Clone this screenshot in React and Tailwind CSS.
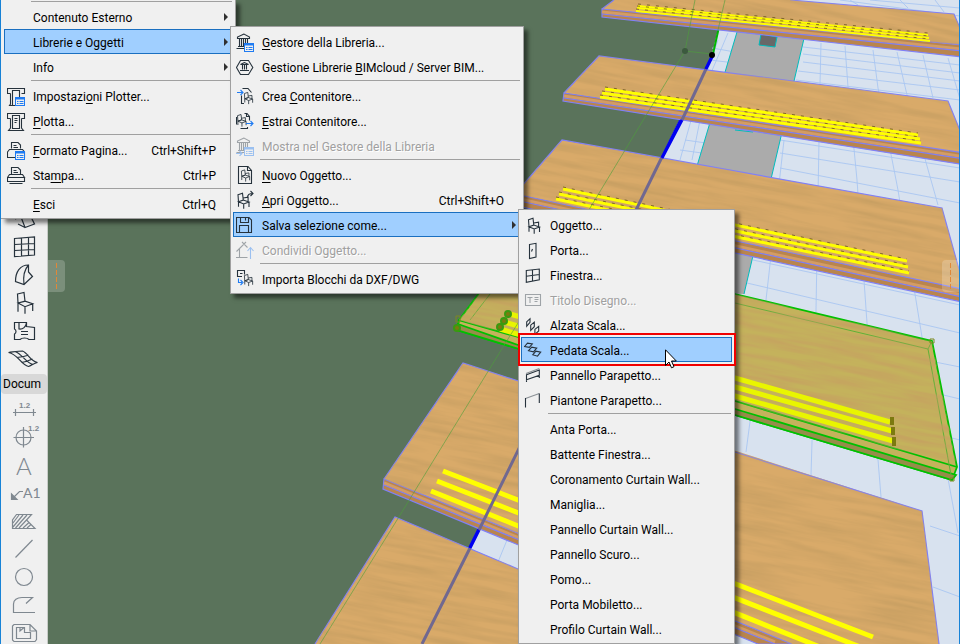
import clsx from "clsx";

const INK = "#26323c";
const BLUE = "#1f7bf2";

/* ---------- menu icons, 20 x 20 ---------- */

function PanelBadge() {
  return (
    <g stroke={BLUE} fill="none" strokeWidth="1">
      <rect x="8.5" y="11.5" width="9" height="8" fill="#f0f0f0" />
      <path d="M8 12.5h10" strokeWidth="2" />
      <path d="M10 15.5h1.5M12.5 15.5h4M10 17.5h1.5M12.5 17.5h4" />
    </g>
  );
}

function Chair({ transform }) {
  return (
    <path
      transform={transform}
      d="M4.5 4.7L9 3.2L9.8 10.1L5 11.7zM5 11.7L9.8 10.1L15.5 12L10.2 14zM5 11.7V16.7M10.2 14V18.8M15.5 12V17M9.6 8L14.6 7.2V11.8"
    />
  );
}

function Temple() {
  return (
    <path d="M8 2L1.5 5V6.5H13.5V5zM3.5 6.5V14.5M5.5 6.5V14.5M7.5 6.5V14.5M9.5 6.5V14.5M11.5 6.5V14.5M2 14.5H13M.5 16.5H14.5" />
  );
}

const icons = {
  plotSetup: (
    <>
      <path d="M3.5 7.5H.5V2.5H17.5V7.5H14.5M3.5 7.5V18L2.5 19.5H13M5.5 19.5V4.5H12.5V12" />
      <PanelBadge />
    </>
  ),
  plot: (
    <path d="M3.5 7.5H.5V2.5H17.5V7.5H14.5M3.5 7.5V17L1.5 19.5H16.5L14.5 17V7.5M5.5 17.5V4.5H12.5V17.5zM7.5 7.5H10.5M7.5 9.5H10.5M7.5 11.5H9.5" />
  ),
  pageSetup: (
    <>
      <path d="M4.5 8.5V2.5H11L13.5 5V8.5M6.5 5.5H9.5M6.5 7.5H11M2.5 9.5H15.5L17.5 12V17.5H.5V12z" />
      <PanelBadge />
    </>
  ),
  print: (
    <path d="M4.5 9.5V2.5H11L13.5 5V9.5M6.5 5.5H9.5M6.5 7.5H11M2.5 9.5H15.5L17.5 12.5H.5zM.5 12.5V16.5H17.5V12.5M2.5 18.5H15.5" />
  ),
  library: (
    <>
      <Temple />
      <PanelBadge />
    </>
  ),
  cloud: (
    <path d="M4.5 3.5H12.5L16.8 10.5L12.5 17.5H4.5L.5 10.5zM8.5 5.5L4.5 7.5H12.5zM6.5 7.5V12.5M8.5 7.5V12.5M10.5 7.5V12.5M4 13.5H13" />
  ),
  createBox: (
    <>
      <path d="M6.5 2.5H12L15.5 6.5M5.5 9.5V17.5H8" />
      <Chair transform="translate(5 4) scale(.75)" />
      <path d="M1 6.5H6.5M4.5 4L7 6.5L4.5 9" stroke={BLUE} />
    </>
  ),
  extractBox: (
    <>
      <path d="M.5 6V13.5M4.5 17.5H11.5V16M8.5 2.5H11L13.5 5.5V9.5M10.5 2.5V5.5H13" />
      <Chair transform="translate(-2 1) scale(.78)" />
      <path d="M10 12.5H16.5M14.5 10L17 12.5L14.5 15" stroke={BLUE} />
    </>
  ),
  showLibrary: (
    <>
      <Temple />
      <PanelBadge />
      <path d="M0 17.5H5.5M3.5 15L6 17.5L3.5 20" stroke={BLUE} />
    </>
  ),
  newObject: (
    <>
      <path d="M2.5 1.5H12L15.5 5.5V18.5H2.5zM11.5 1.5V5.5H15.5" />
      <Chair transform="translate(2 2.5) scale(.75)" />
    </>
  ),
  openObject: (
    <>
      <Chair transform="translate(-2.5 0)" />
      <path d="M11.5 7.5C11.5 4.5 13 3.5 17 3.5M14.5 1L17 3.5L14.5 6" />
    </>
  ),
  save: <path d="M.5 2.5H13L15.5 5V17.5H.5zM4.5 2.5V7.5H12.5V2.5M9.5 3V5.5M3.5 17.5V10.5H12.5V17.5" />,
  share: (
    <>
      <path d="M.5 11.5L8 4L11.5 7.5M3.5 8.5V17.5H11.5M0 17.5H3.5M6 2L8 4L10 2" />
      <path d="M14.5 19V8M11.5 11L14.5 7.5L17.5 11" stroke={BLUE} />
    </>
  ),
  importDxf: (
    <>
      <path d="M8.5 5.5V1.5H1.5V7.5H6M4 4.5H6.5" />
      <path d="M2.5 9.5V13.5H6M4.5 11L7 13.5L4.5 16" stroke={BLUE} />
      <Chair transform="translate(5 3) scale(.75)" />
    </>
  ),
  object: <Chair />,
  door: <path d="M5.5 4.5L12 3.3V17L5.5 18.5zM7.5 11.5L8.5 9" />,
  window: <path d="M2.3 5.5L15.3 4V14.8L2.3 17.3zM8.5 4.8V16M2.3 11.2L15.3 9.5" />,
  title: <path d="M1.5 4.5H16.5V15.5H1.5zM3.5 7.5H8.5M6 7.5V13M10.5 7.5H14.5M10.5 9.5H14.5M10.5 11.5H13.5" />,
  riser: (
    <path d="M2.7 6.8L6 3.7V7.3L2.7 11.3zM6.7 10.2L10.3 7.2V11.7L6.7 15.3zM10.9 14.4L14.7 11.4V16L10.9 19.3z" />
  ),
  tread: (
    <path d="M.5 6.5L3.5 3.2L8.3 4L5.3 7.4zM4.5 10.7L7.7 7.2L12.7 8.2L9.5 11.8zM8.7 14.8L11.9 11.2L16.7 12.2L13.5 16.2z" />
  ),
  railPanel: (
    <>
      <path d="M2 8.5L15.3 3.5" strokeOpacity=".5" />
      <path d="M2.5 9.7L15.3 5V10.3L2.5 14.7zM2.5 14.7V17M15.3 10.3V13" />
    </>
  ),
  railPost: (
    <>
      <path d="M1.5 8.5L15.3 3.5" strokeOpacity=".5" />
      <path d="M1.5 8V17.5M15.3 3.5V13" />
    </>
  ),
};

function MenuIcon({ name, faded }) {
  return (
    <svg
      className={clsx("h-5 w-5 shrink-0", faded && "opacity-40")}
      viewBox="0 0 20 20"
      fill="none"
      stroke={INK}
      strokeWidth="1.1"
      aria-hidden="true"
    >
      {name && icons[name]}
    </svg>
  );
}

/* ---------- menu data; "&" marks the access key ---------- */

const fileMenu = [
  "-",
  { label: "Contenuto Esterno", sub: true },
  { label: "Librerie e Oggetti", sub: true, active: true },
  { label: "Info", sub: true },
  "-",
  { label: "Impostazi&oni Plotter...", icon: "plotSetup" },
  { label: "&Plotta...", icon: "plot" },
  "-",
  { label: "&Formato Pagina...", icon: "pageSetup", keys: "Ctrl+Shift+P" },
  { label: "Sta&mpa...", icon: "print", keys: "Ctrl+P" },
  "-",
  { label: "&Esci", keys: "Ctrl+Q" },
];

const libraryMenu = [
  { label: "&Gestore della Libreria...", icon: "library" },
  { label: "Gestione Librerie &BIMcloud / Server BIM...", icon: "cloud" },
  "-",
  { label: "Crea &Contenitore...", icon: "createBox" },
  { label: "&Estrai Contenitore...", icon: "extractBox" },
  { label: "Mostra nel Gestore della Libreria", icon: "showLibrary", disabled: true },
  "-",
  { label: "&Nuovo Oggetto...", icon: "newObject" },
  { label: "&Apri Oggetto...", icon: "openObject", keys: "Ctrl+Shift+O" },
  { label: "Salva selezione come...", icon: "save", sub: true, active: true },
  { label: "Condividi Oggetto...", icon: "share", disabled: true },
  "-",
  { label: "Importa Blocchi da DXF/DWG", icon: "importDxf" },
];

const saveAsMenu = [
  { label: "Oggetto...", icon: "object" },
  { label: "Porta...", icon: "door" },
  { label: "Finestra...", icon: "window" },
  { label: "Titolo Disegno...", icon: "title", disabled: true },
  { label: "Alzata Scala...", icon: "riser" },
  { label: "Pedata Scala...", icon: "tread", active: true },
  { label: "Pannello Parapetto...", icon: "railPanel" },
  { label: "Piantone Parapetto...", icon: "railPost" },
  "-",
  { label: "Anta Porta..." },
  { label: "Battente Finestra..." },
  { label: "Coronamento Curtain Wall..." },
  { label: "Maniglia..." },
  { label: "Pannello Curtain Wall..." },
  { label: "Pannello Scuro..." },
  { label: "Pomo..." },
  { label: "Porta Mobiletto..." },
  { label: "Profilo Curtain Wall..." },
];

function Label({ text }) {
  const at = text.indexOf("&");
  if (at < 0) return <span className="pt-1">{text}</span>;
  return (
    <span className="pt-1">
      {text.slice(0, at)}
      <u className="underline-offset-2">{text[at + 1]}</u>
      {text.slice(at + 2)}
    </span>
  );
}

function MenuItem({ item }) {
  return (
    <button
      type="button"
      role="menuitem"
      disabled={item.disabled}
      className={clsx(
        "flex h-[25px] w-full items-center gap-1.5 border pl-0.5 text-left leading-[17px] whitespace-nowrap",
        item.active ? "border-[#1a6fc0] bg-[#a0cfff]" : "border-transparent",
        item.disabled ? "text-[#a0a0a0] [text-shadow:1px_1px_0_#fff]" : "text-black"
      )}
    >
      <MenuIcon name={item.icon} faded={item.disabled} />
      <Label text={item.label} />
      {item.keys && <span className="mr-4 ml-auto pt-1">{item.keys}</span>}
      {item.sub && (
        <svg className="mr-1 ml-auto h-2 w-1" viewBox="0 0 4 8" fill="#303030" aria-hidden="true">
          <path d="M0 0L4 4L0 8z" />
        </svg>
      )}
    </button>
  );
}

function Menu({ items, label, className }) {
  return (
    <div
      role="menu"
      aria-label={label}
      className={clsx(
        "absolute border-[#a0a0a0] bg-[#f0f0f0] shadow-[4px_4px_4px_rgba(0,0,0,0.5)]",
        className
      )}
    >
      {items.map((item, i) =>
        item === "-" ? (
          <div key={i} role="separator" className="flex h-1 flex-col pt-px pr-px pl-[27px]">
            <div className="h-px bg-[#a0a0a0]" />
          </div>
        ) : (
          <MenuItem key={i} item={item} />
        )
      )}
    </div>
  );
}

/* ---------- tool box ---------- */

const modelTools = [
  { name: "Tetto", art: <path d="M14 14L20 12L24 22.5L33.5 19L29 10M17 19L24 22.5" /> },
  {
    name: "Curtain Wall",
    art: <path d="M13.5 5.5L33.5 4V22L13.5 23.5zM20.5 5V23M27.5 4.5V22.5M13.5 11.5L33.5 10.5M13.5 17.5L33.5 16.5" />,
  },
  {
    name: "Shell",
    art: <path d="M27.5 4C19 4 14.5 11 14.5 20.5L23 23.5L31.5 15.5L27.5 11zM27.5 4C23 9 22 16 23 23.5" />,
  },
  {
    name: "Oggetto",
    art: <path d="M16.5 5L23 3.5L24 12.2L17 14zM17 14L24 12.2L31.7 14.7L24 17.7zM17 14V22.7M24 17.7V24.7M31.7 14.7V22" />,
  },
  {
    name: "Zona",
    art: <path d="M18 5.5H13.5V12C15.5 13 15.5 16 13.5 17V22.5H19C21 20.5 26 20.5 28 22.5H33.5V10.5L25.5 9.5V5.5H18V12C22 12.5 25 10 25.5 5.5M20 14.5H27M20 17.5H27" />,
  },
  {
    name: "Mesh",
    art: <path d="M7.5 7.5C12 7 17 6 21.5 6C27 8 29 16 36.5 17.5C33 18 30 21 27.5 21.5C20 20 17 9 7.5 7.5M16 12.5C21 12 24 11.5 27.5 10M20.5 17.5C25 17 28 15.5 31.5 14M14.5 6.8C21 9 25 18 32 19.5" />,
  },
];

const documentTools = [
  {
    name: "Quota",
    art: (
      <>
        <path d="M12 17.5H35M14.5 14V21M32.5 14V21" />
        <text x="18" y="13" className="font-['Liberation_Sans'] text-[8px] font-bold">1.2</text>
      </>
    ),
  },
  {
    name: "Quota Livello",
    art: (
      <>
        <circle cx="22.5" cy="14.5" r="7.5" />
        <path d="M12.5 14.5H33M22.5 4V24.5" />
        <text x="27" y="8" className="font-['Liberation_Sans'] text-[8px] font-bold">1.2</text>
      </>
    ),
  },
  {
    name: "Testo",
    art: <text x="15" y="24" className="font-['Lato'] text-[24px] font-light">A</text>,
  },
  {
    name: "Etichetta",
    art: (
      <>
        <path d="M22 12.5H18.5L13 18" />
        <path d="M10.5 15V20.5H16z" fill="#7f8890" />
        <text x="22" y="19" className="font-['Lato'] text-[14px]">A1</text>
      </>
    ),
  },
  {
    name: "Retino",
    art: <path d="M15.5 7.5H30.5L25.5 13L34 21.5H11.5V13zM12 20L22 8M14.5 21L26 8M18 21L25.5 13M22 21L28 15.5M26 21L30 17.5M12 16L18 8" />,
  },
  { name: "Linea", art: <path d="M31.5 5L14.5 22.5" /> },
  { name: "Cerchio", art: <circle cx="23" cy="14" r="8.5" /> },
  { name: "Polilinea", art: <path d="M34 21.5H12.5V13C12.5 9 16 6.5 21 6.5H31.5L25 12.5" /> },
  {
    name: "Disegno",
    art: <path d="M13 5.5H29L35.5 12V20.5L34 22.5H13L11.5 21V7zM29 5.5V12H35.5M15.5 8.5H23.5V13.5H29.5V19.5H15.5zM19 8.5V12L23 8.5" />,
  },
];

function ToolButton({ tool, color }) {
  return (
    <button type="button" aria-label={tool.name} className="h-7 w-full shrink-0">
      <svg className="h-7 w-[46px]" viewBox="0 0 46 28" fill="none" stroke={color} strokeWidth="1.2">
        <g className="[&_text]:fill-[#7f8890] [&_text]:stroke-none">{tool.art}</g>
      </svg>
    </button>
  );
}

function Toolbox() {
  return (
    <aside className="flex w-12 shrink-0 flex-col border-r border-l border-r-[#c8ccc8] border-l-[#1883d7] bg-[#f0f0f0] pt-[205px]">
      {modelTools.map((t) => (
        <ToolButton key={t.name} tool={t} color={INK} />
      ))}
      <div className="my-px h-5 w-full shrink-0 rounded-sm bg-[#d8d8d8] pl-0.5 leading-5">Docum</div>
      {documentTools.map((t) => (
        <ToolButton key={t.name} tool={t} color="#7f8890" />
      ))}
    </aside>
  );
}

/* ---------- 3D view ---------- */

const treads = [
  {
    top: "602,9 614,0 790,0 954,14 972,56 972,46",
    front: "602,9 972,46 972,58 602,17",
    mid: "M602 12L972 50",
    back: "M602 9L614 0M790 0L954 14L972 56",
    strips: [[638, 6, 928, 35], [637, 8, 929, 38], [636, 11, 930, 41]],
    w: 2,
    dotted: true,
  },
  {
    top: "564,93 599,56 948,101 972,160 972,154",
    front: "564,93 972,154 972,166 563,101",
    mid: "M564 96L972 158",
    back: "M564 93L599 56L948 101L972 160",
    strips: [[605, 89, 918, 135], [602, 93, 920, 139], [600, 97, 921, 143]],
    w: 3,
    dotted: true,
  },
  {
    top: "515,194 562,140 942,208 962,280 962,289",
    front: "515,194 962,289 962,302 513,205",
    mid: "M515 198L962 295",
    back: "M515 194L562 140L942 208L962 280",
    strips: [[563, 189, 907, 261], [559, 194, 908, 267], [556, 199, 909, 273]],
    w: 3,
    dotted: true,
  },
  {
    top: "384,479 463,363 922,511 939,644 792,644",
    front: "384,479 792,644 758,644 383,489",
    mid: "M384 483L775 642",
    back: "M384 479L463 363L735 452L922 511L939 644",
    strips: [[443, 471, 873, 637], [437, 481, 873, 652], [431, 491, 830, 651]],
    w: 5,
  },
  {
    top: "315,644 395,517 518,569 735,656",
    back: "M315 644L395 517L518 569L735 656",
    strips: [],
  },
];

const floorGrid =
  "M821 43L820 84L819 140L816 310L811 475M845 46L848 87L857 180L867 323L881 497M873 50L878 88L898 190L922 337L958 533" +
  "M897 52L907 95L938 205M923 55L933 98M948 58L960 99M784 140L766 300L746 452M718 40L690 124L680 160M728 33L708 80L692 160" +
  "M803 47L960 65M803 54L960 73M803 62L960 81M798 71L960 90M796 80L960 100M780 140L960 168M780 153L960 182M780 168L960 203" +
  "M753 260L960 305M747 283L960 333M925 360L960 367M935 393L960 399M940 435L960 440M930 526L960 536M933 587L960 597" +
  "M710 60L735 63M712 48L735 52M685 140L706 143M680 150L702 153M507 540L498 562M840 0L960 16M870 0L960 8M850 0L858 5M900 0L908 8M935 0L944 12";

function Scene() {
  return (
    <svg
      className="absolute inset-0 h-full w-full"
      viewBox="48 0 912 644"
      preserveAspectRatio="xMinYMin slice"
      fill="none"
      role="img"
      aria-label="Vista 3D della scala"
    >
      <defs>
        <filter id="grain" x="0" y="0" width="100%" height="100%">
          <feTurbulence type="fractalNoise" baseFrequency="0.012 0.16" numOctaves="4" seed="4" />
          <feColorMatrix values="0 0 0 0 .56  0 0 0 0 .34  0 0 0 0 .12  1.7 0 0 0 -.6" />
        </filter>
        <clipPath id="wood">
          {treads.map((t, i) => (
            <polygon key={i} points={t.top} />
          ))}
          <polygon points="459,320 518,241 735,294 932,341 957,467" />
        </clipPath>
      </defs>

      <path d="M48 0H960V644H48z" fill="#5a735b" />
      <path d="M725 0H960V644H421L712 54z" fill="#d8e2ef" />
      <path d={floorGrid} stroke="#a9c6f2" strokeWidth=".9" />
      <path d="M740 22L806 30L744 294L660 290z" fill="#ababab" />
      <path d="M740 22L660 290M806 30L744 294M735 130L753 132" stroke="#00bcbc" />
      <path d="M761 34L777 37L775 47L759 45z" fill="#686868" stroke="#00bcbc" />

      <path d="M713 54L422 644" stroke="#0000f0" strokeWidth="2.6" />
      <path d="M725 0L713 54" stroke="#00b400" strokeWidth="2" />

      {treads.map((t, i) => (
        <g key={i} stroke="#8080f6" strokeWidth="1.2">
          <polygon points={t.top} fill="#d9aa69" stroke="none" />
          {t.front && <polygon points={t.front} fill="#b9854d" />}
          {t.mid && <path d={t.mid} stroke="#d39c64" strokeWidth="3" />}
          {t.mid && <path d={t.mid} transform="translate(0 2)" />}
          <path d={t.back} />
        </g>
      ))}

      {/* selected tread */}
      <g stroke="#00c000" strokeWidth="1.8">
        <path d="M459 320L518 241L735 294L932 341L957 467L952 480L735 415L457 330z" fill="#c4b25c" />
        <path d="M458 324L518 345L735 409L956 475L952 480L735 415L457 330z" fill="#978c4a" />
        <path d="M458 320L518 337L735 401L957 467" />
      </g>
      <path d="M470 320L524 250L735 303L928 349L951 475M928 349L932 341" stroke="#5fb038" />

      <g clipPath="url(#wood)">
        <rect x="200" y="-300" width="1000" height="1100" filter="url(#grain)" transform="rotate(11 600 300)" />
      </g>

      {treads.map((t) =>
        t.strips.map(([x1, y1, x2, y2]) => (
          <g key={`${x1}-${y1}`}>
            <path d={`M${x1} ${y1}L${x2} ${y2}`} stroke="#ffff00" strokeWidth={t.w} />
            {t.dotted && (
              <path
                d={`M${x1} ${y1 - 2}L${x2} ${y2 - 2}`}
                stroke="#5c4a10"
                strokeWidth=".7"
                strokeDasharray="3 6"
              />
            )}
          </g>
        ))
      )}

      <path d="M510 314L735 378L890 422M504 322L735 387L892 431M500 329L735 396L893 441" stroke="#e9f500" strokeWidth="5" />
      <path d="M892 417v8M893 427v8M894 437v9" stroke="#7c7a10" strokeWidth="4" />
      <g stroke="#3a9a10" strokeWidth="2" fill="#7c7a10">
        <circle cx="508" cy="314" r="3" />
        <circle cx="504" cy="321" r="3" />
        <circle cx="500" cy="327" r="3" />
        <circle cx="457" cy="328" r="3" />
      </g>
      <path d="M456 316h4v6h-4zM930 339h4v4h-4zM950 478h4v3h-4z" stroke="#7c8a20" />

      {/* walking line and its offset */}
      <path d="M706 69L682 120M662 157L479 530M470 548L422 644" stroke="#706890" strokeWidth="3" />
      <path d="M706 69L713 55M682 120L662 158M479 530L470 548" stroke="#0000f0" strokeWidth="3" />
      <path d="M695 0L685 51L590 208L503 347L397 520L320 644M685 51L712 54M725 0L718 30" stroke="#4da03a" strokeOpacity=".6" />
      <circle cx="685" cy="51" r="3" fill="#3c5a3e" />
      <circle cx="712" cy="55" r="3" fill="#000" />
    </svg>
  );
}

function PanelHandle({ side }) {
  return (
    <div
      className={clsx(
        "absolute top-[260px] flex h-8 w-[17px] justify-center bg-white/20 py-[3px]",
        side === "left" ? "left-0 rounded-r" : "right-0 rounded-l"
      )}
    >
      <div className="w-px bg-[repeating-linear-gradient(#e08838_0_5px,transparent_5px_7px)]" />
    </div>
  );
}

export default function App() {
  return (
    <div className="relative flex h-screen w-full cursor-default overflow-hidden bg-[#5a735b] font-['Roboto',sans-serif] text-[12px] leading-4">
      <Toolbox />
      <main className="relative min-w-0 flex-1 border-r border-[#1883d7]">
        <Scene />
        <PanelHandle side="left" />
        <PanelHandle side="right" />
      </main>

      <Menu
        items={fileMenu}
        label="Archivio"
        className="top-0 left-px w-[235px] border-r border-b pr-0.5 pb-0.5 pl-[3px]"
      />
      <Menu items={libraryMenu} label="Librerie e Oggetti" className="top-[26px] left-[230px] w-[294px] border p-0.5" />
      <Menu items={saveAsMenu} label="Salva selezione come" className="top-[209px] left-[518px] w-[217px] border p-0.5" />

      {/* highlighted command and pointer */}
      <div className="pointer-events-none absolute top-[333px] left-[518px] h-[33px] w-[218px] border-2 border-[#f00000]" />
      <svg className="pointer-events-none absolute top-[349px] left-[665px] h-5 w-3" viewBox="0 0 12 20" aria-hidden="true">
        <path d="M.5 .8V16.5L4 13L6.5 18.8L9 17.7L6.5 12H11.3z" fill="#fff" stroke="#000" />
      </svg>
    </div>
  );
}
